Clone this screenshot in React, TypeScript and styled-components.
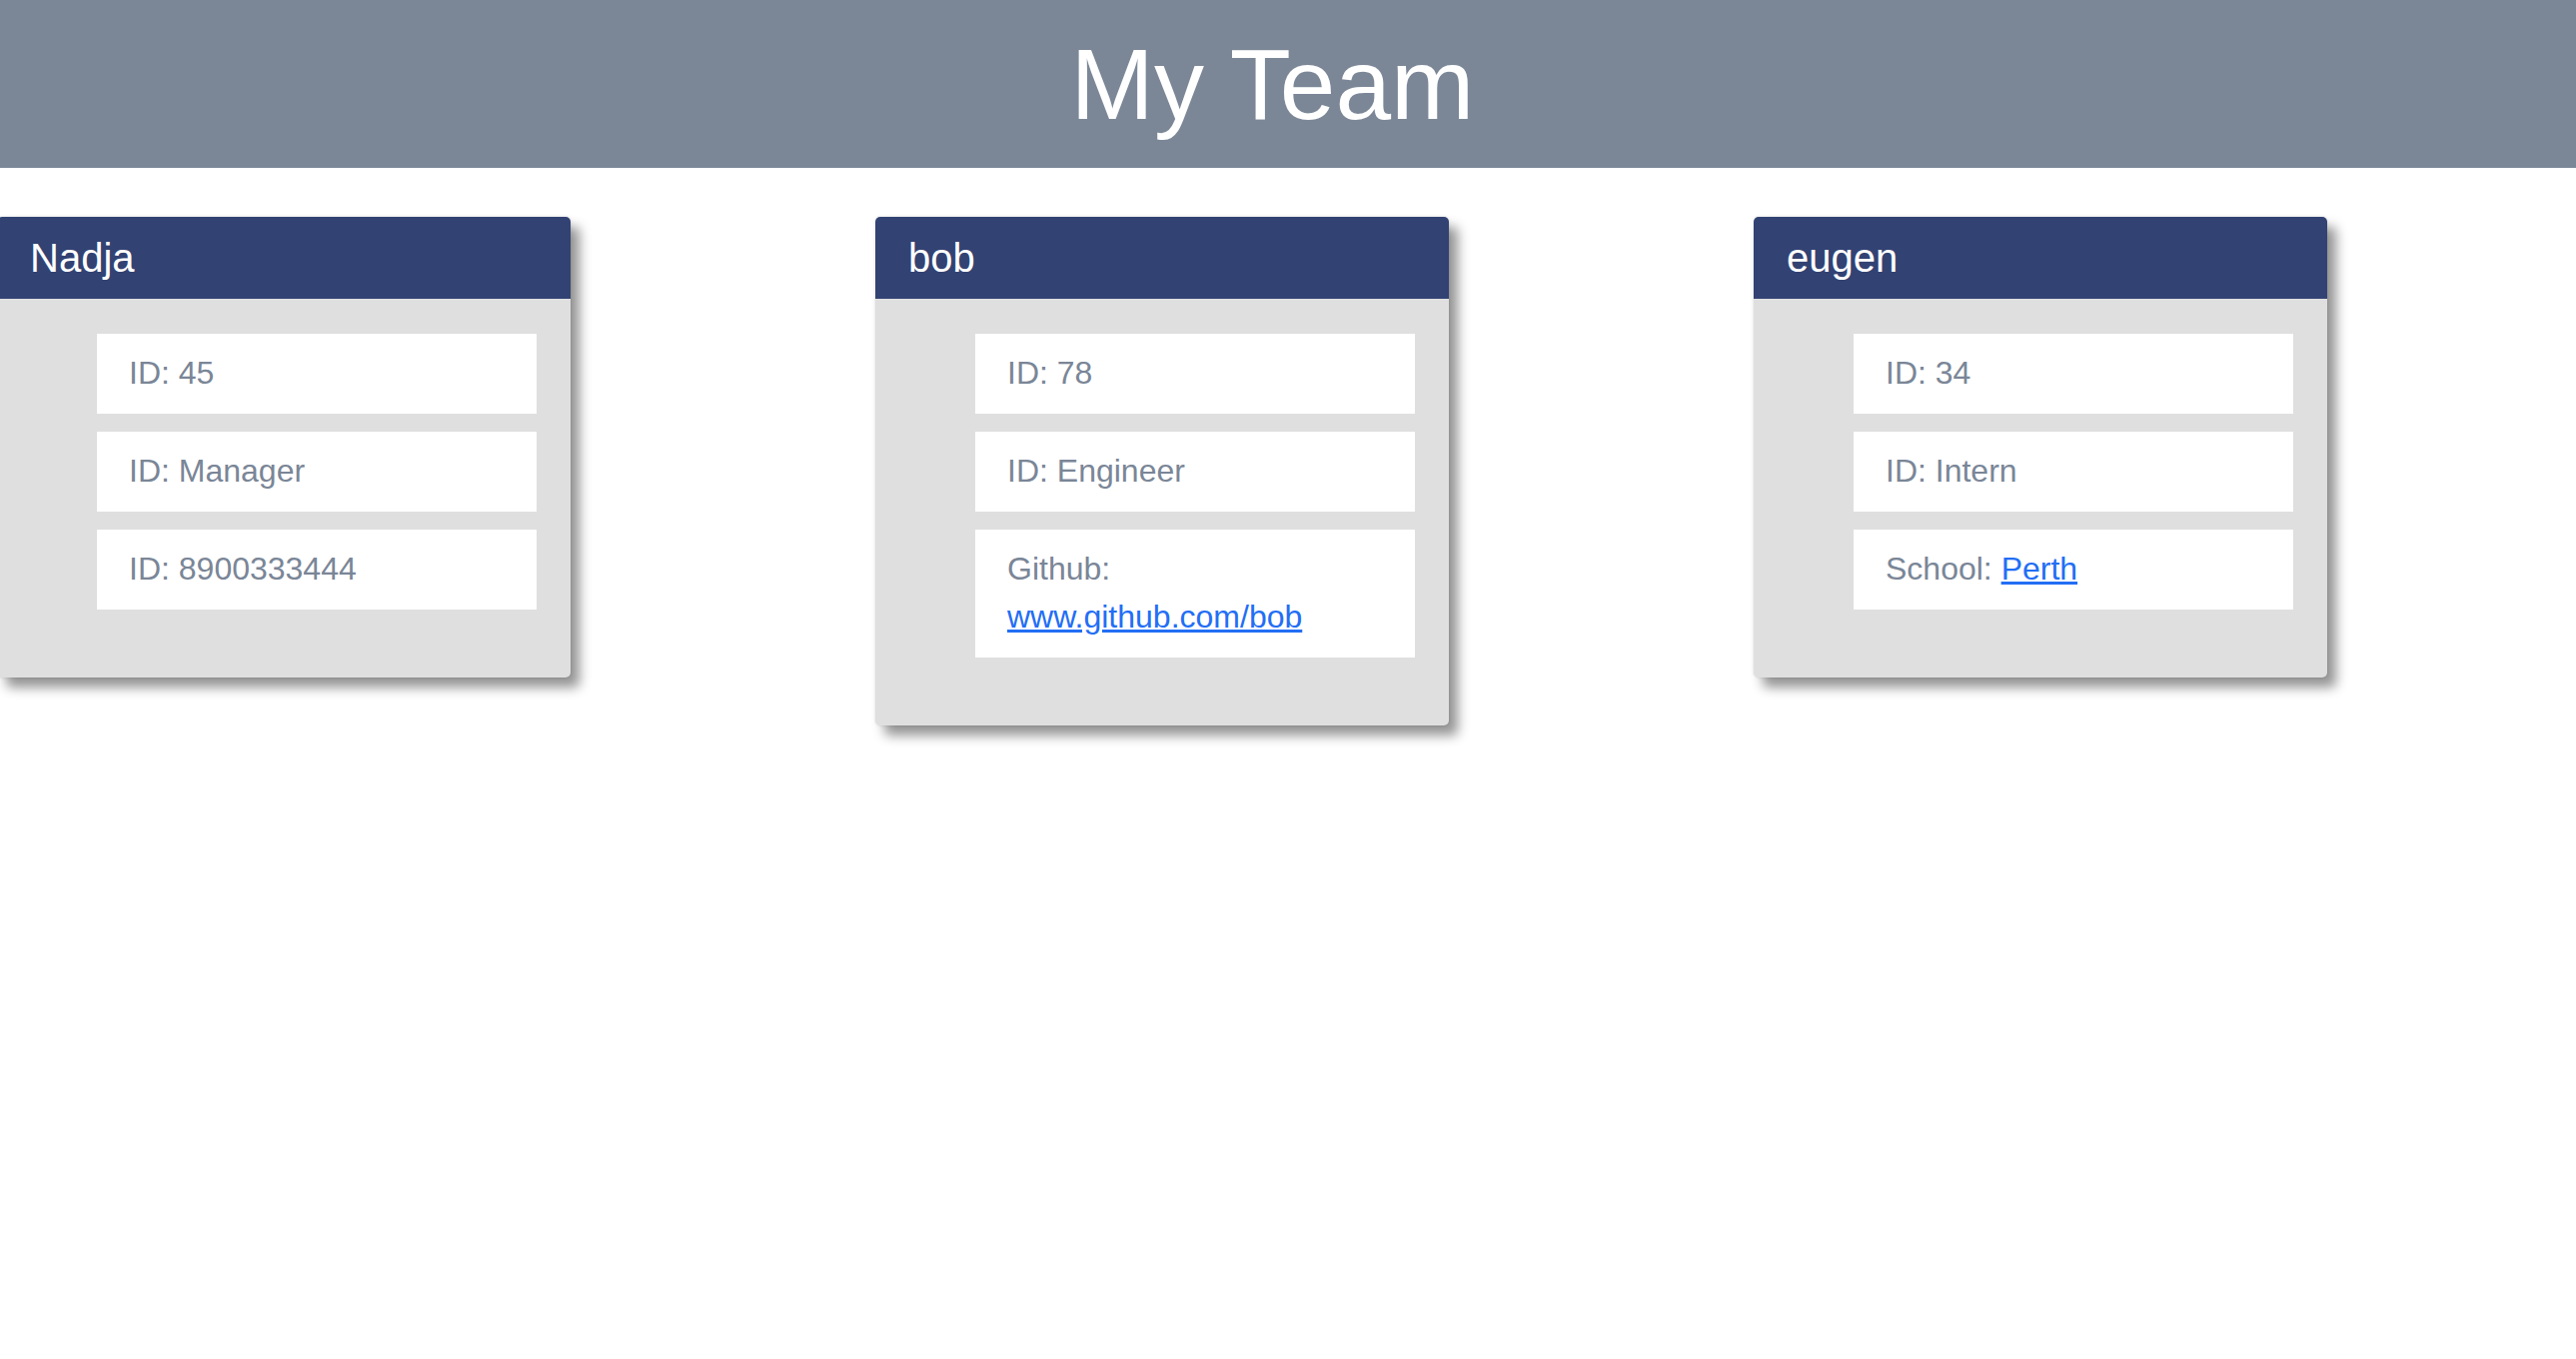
import React from "react";
import styled, { createGlobalStyle } from "styled-components";

const GlobalStyle = createGlobalStyle`
  html, body {
    margin: 0;
    padding: 0;
    background: #ffffff;
    font-family: "Liberation Sans", Arial, Helvetica, sans-serif;
  }
  body { min-height: 100vh; }
  * { box-sizing: border-box; }
`;

const Header = styled.header`
  height: 168px;
  background: #7b8797;
  display: flex;
  align-items: center;
  justify-content: center;
  padding-right: 31px;
`;

const Title = styled.h1`
  margin: 0;
  font-size: 100px;
  font-weight: 400;
  color: #ffffff;
  line-height: 1.15;
`;

const CardRow = styled.main`
  display: flex;
  align-items: flex-start;
  gap: 305px;
  margin-top: 49px;
  margin-left: -3px;
`;

const Card = styled.section`
  width: 574px;
  flex: none;
  background: #dfdfdf;
  border-radius: 5px;
  overflow: hidden;
  box-shadow: 0 0 3px rgba(0, 0, 0, 0.12), 9px 10px 12px rgba(0, 0, 0, 0.42);
`;

const CardHeader = styled.h2`
  margin: 0;
  background: #324273;
  color: #ffffff;
  font-size: 40px;
  font-weight: 400;
  line-height: 48px;
  padding: 17px 33px;
`;

const InfoList = styled.ul`
  list-style: none;
  margin: 0;
  padding: 35px 34px 68px 100px;
  display: flex;
  flex-direction: column;
  gap: 18px;
`;

const InfoItem = styled.li`
  background: #ffffff;
  color: #7a8697;
  font-size: 32px;
  line-height: 48px;
  padding: 15px 32px 17px;
`;

const InfoLink = styled.a`
  color: #236ef5;
  text-decoration: underline;
`;

type Member = {
  name: string;
  id: string;
  role: string;
  extra: React.ReactNode;
};

const members: Member[] = [
  { name: "Nadja", id: "45", role: "Manager", extra: <>ID: 8900333444</> },
  {
    name: "bob",
    id: "78",
    role: "Engineer",
    extra: (
      <>
        Github: <InfoLink href="#">www.github.com/bob</InfoLink>
      </>
    ),
  },
  {
    name: "eugen",
    id: "34",
    role: "Intern",
    extra: (
      <>
        School: <InfoLink href="#">Perth</InfoLink>
      </>
    ),
  },
];

export default function App() {
  return (
    <>
      <GlobalStyle />
      <Header>
        <Title>My Team</Title>
      </Header>
      <CardRow>
        {members.map((m) => (
          <Card key={m.name}>
            <CardHeader>{m.name}</CardHeader>
            <InfoList>
              <InfoItem>ID: {m.id}</InfoItem>
              <InfoItem>ID: {m.role}</InfoItem>
              <InfoItem>{m.extra}</InfoItem>
            </InfoList>
          </Card>
        ))}
      </CardRow>
    </>
  );
}
